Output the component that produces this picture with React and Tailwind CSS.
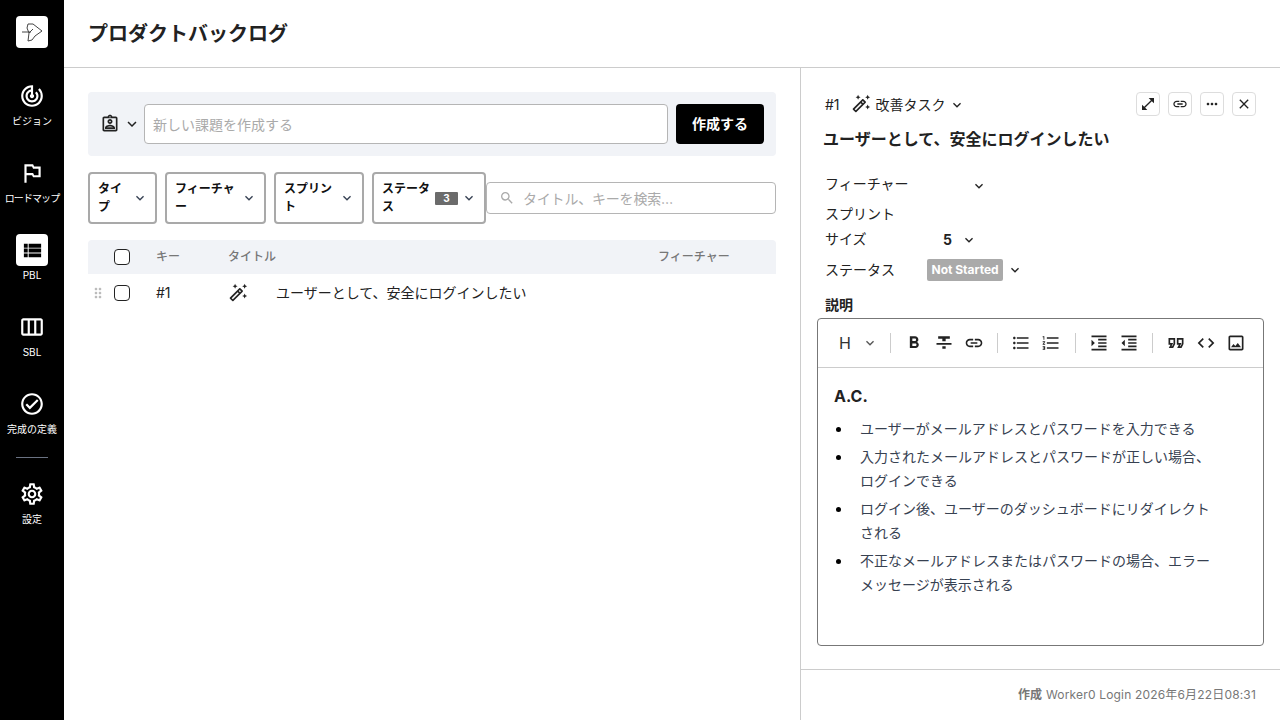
import React from "react";
import {
  MdOutlineTrackChanges,
  MdOutlinedFlag,
  MdViewList,
  MdOutlineViewWeek,
  MdOutlineCheckCircle,
  MdOutlineSettings,
  MdOutlineAutoFixHigh,
  MdOutlineAssignmentInd,
  MdKeyboardArrowDown,
  MdOpenInFull,
  MdLink,
  MdMoreHoriz,
  MdClose,
  MdDragIndicator,
  MdSearch,
  MdFormatBold,
  MdFormatStrikethrough,
  MdFormatListBulleted,
  MdFormatListNumbered,
  MdFormatIndentIncrease,
  MdFormatIndentDecrease,
  MdOutlineFormatQuote,
  MdCode,
  MdOutlineImage,
} from "react-icons/md";

const font = "font-['Inter','Noto_Sans_CJK_JP',sans-serif]";

const Logo = () => (
  <svg width="22" height="22" viewBox="0 0 22 22" fill="none" stroke="#444" strokeWidth="1">
    <path d="M1 11h9M7 3h5l9 7-7 5-3 4-4 1 1-8-2-5zM8 12l4-4" />
  </svg>
);

const NavItem = ({ icon: Icon, label, active, className, size = 26, labelClass = "" }) => (
  <div className={`flex flex-col items-center ${className}`}>
    <div className={`w-8 h-8 rounded flex items-center justify-center ${active ? "bg-white text-black" : "text-white"}`}>
      <Icon size={size} />
    </div>
    <span className={`text-[10px] leading-[14px] text-white mt-[2px] whitespace-nowrap ${labelClass}`}>{label}</span>
  </div>
);

const Sidebar = () => (
  <aside className="w-16 shrink-0 bg-black flex flex-col items-center pt-4">
    <div className="w-8 h-8 bg-white rounded flex items-center justify-center">
      <Logo />
    </div>
    <NavItem icon={MdOutlineTrackChanges} label="ビジョン" className="mt-8" />
    <NavItem icon={MdOutlinedFlag} label="ロードマップ" labelClass="tracking-[-0.9px]" className="mt-[29px]" />
    <NavItem icon={MdViewList} label="PBL" size={23} active className="mt-[29px]" />
    <NavItem icon={MdOutlineViewWeek} label="SBL" className="mt-[29px]" />
    <NavItem icon={MdOutlineCheckCircle} label="完成の定義" className="mt-[29px]" />
    <div className="w-8 h-px bg-gray-500 mt-[21px]" />
    <NavItem icon={MdOutlineSettings} label="設定" className="mt-5" />
  </aside>
);

const FilterButton = ({ label, width, badge }) => (
  <button className={`h-[52px] ${width} shrink-0 border-2 border-[#a9a9a9] rounded flex items-center pl-2 pr-[7px] text-left`}>
    <span className="flex-1 text-xs leading-[18px] font-bold text-[#111]">{label}</span>
    {badge && <span className="w-[23px] text-center bg-[#6b6b6b] text-white text-[10px] leading-[13px] font-bold ml-[5px] mr-[3px] rounded-[1px]">{badge}</span>}
    <MdKeyboardArrowDown size={16} className="text-gray-700" />
  </button>
);

const Backlog = () => (
  <section className="flex-1 min-w-0 pl-6 pr-6 pt-6">
    <div className="h-16 bg-[#f1f3f7] rounded flex items-center pl-3 pr-3">
      <MdOutlineAssignmentInd size={20} className="text-[#222]" />
      <MdKeyboardArrowDown size={18} className="text-[#222] ml-[3px] mr-[3px]" />
      <div className="w-[524px] h-10 bg-white border border-[#b5b5b5] rounded flex items-center px-2 pt-[1px] text-sm text-[#aaa]">
        新しい課題を作成する
      </div>
      <button className="ml-2 w-[88px] h-10 bg-black text-white text-sm font-bold rounded">作成する</button>
    </div>

    <div className="flex items-center gap-2 mt-4">
      <FilterButton label="タイプ" width="w-[69px]" />
      <FilterButton label="フィーチャー" width="w-[101px]" />
      <FilterButton label="スプリント" width="w-[90px]" />
      <FilterButton label="ステータス" width="w-[114px] -mr-2" badge="3" />
      <div className="flex-1 h-8 border border-[#b5b5b5] rounded flex items-center pl-3 text-sm tracking-[-0.2px] leading-[32px] pt-[1px] text-[#aaa]">
        <MdSearch size={16} className="mr-2 -mt-[1px]" />
        タイトル、キーを検索…
      </div>
    </div>

    <div className="h-[34px] bg-[#f1f3f7] rounded-t mt-4 flex items-center text-xs font-medium text-[#777]">
      <div className="w-[68px] pl-[26px]">
        <div className="w-4 h-4 border border-[#222] rounded-sm bg-white" />
      </div>
      <div className="w-[72px]">キー</div>
      <div className="w-[430px]">タイトル</div>
      <div>フィーチャー</div>
    </div>
    <div className="h-[38px] flex items-center text-sm text-[#222]">
      <div className="w-[68px] flex items-center pl-[2px]">
        <MdDragIndicator size={16} className="text-[#bbb]" />
        <div className="w-4 h-4 border border-[#222] rounded-sm bg-white ml-2" />
      </div>
      <div className="w-[72px]">#1</div>
      <div className="w-[48px]"><MdOutlineAutoFixHigh size={20} /></div>
      <div>ユーザーとして、安全にログインしたい</div>
    </div>
  </section>
);

const IconBox = ({ icon: Icon, size = 16 }) => (
  <button className="w-6 h-6 border border-[#ddd] rounded flex items-center justify-center text-[#222]">
    <Icon size={size} />
  </button>
);

const Sep = () => <div className="w-px h-5 bg-[#ccc]" />;

const Toolbar = () => (
  <div className="h-[49px] border-b border-[#ccc] flex items-center pl-[21px] text-[#222]">
    <span className="text-base leading-none text-[#333] w-4">H</span>
    <MdKeyboardArrowDown size={16} className="text-[#555] ml-[7px]" />
    <div className="ml-3 mr-[13px]"><Sep /></div>
    <div className="flex items-center gap-[10px]">
      <MdFormatBold size={20} />
      <MdFormatStrikethrough size={20} />
      <MdLink size={20} />
    </div>
    <div className="mx-[13px]"><Sep /></div>
    <div className="flex items-center gap-[10px]">
      <MdFormatListBulleted size={20} />
      <MdFormatListNumbered size={20} />
    </div>
    <div className="ml-[14px] mr-[13px]"><Sep /></div>
    <div className="flex items-center gap-[10px]">
      <MdFormatIndentIncrease size={20} />
      <MdFormatIndentDecrease size={20} />
    </div>
    <div className="mx-[13px]"><Sep /></div>
    <div className="flex items-center gap-[10px]">
      <MdOutlineFormatQuote size={20} />
      <MdCode size={20} />
      <MdOutlineImage size={20} />
    </div>
  </div>
);

const Li = ({ children }) => (
  <li className="mb-[3px] pl-2">{children}</li>
);

const Detail = () => (
  <section className="w-[480px] shrink-0 border-l border-[#ccc] flex flex-col">
    <div className="flex-1 min-h-0 pl-4 pr-4 pt-6">
      <div className="flex items-center h-6 pl-2 pr-2 text-sm text-[#222]">
        <span className="pt-[2px]">#1</span>
        <MdOutlineAutoFixHigh size={20} className="ml-[11px]" />
        <span className="ml-[5px] pt-[2px]">改善タスク</span>
        <MdKeyboardArrowDown size={16} className="ml-[3px] mt-[2px]" />
        <div className="ml-auto flex gap-2">
          <IconBox icon={MdOpenInFull} />
          <IconBox icon={MdLink} />
          <IconBox icon={MdMoreHoriz} />
          <IconBox icon={MdClose} />
        </div>
      </div>
      <h2 className="text-base leading-6 font-bold text-[#222] mt-[11px] pl-[6px]">ユーザーとして、安全にログインしたい</h2>
      <div className="text-sm text-[#222] pl-2 mt-5">
        <div className="flex items-center h-[26px]">
          <span className="w-[146px]">フィーチャー</span>
          <MdKeyboardArrowDown size={16} className="mt-[3px]" />
        </div>
        <div className="h-[24px] flex items-center mt-[5px]">スプリント</div>
        <div className="flex items-center h-[26px]">
          <span className="w-[118px]">サイズ</span>
          <span className="font-bold pt-[2px]">5</span>
          <MdKeyboardArrowDown size={16} className="ml-[9px] mt-[2px]" />
        </div>
        <div className="flex items-center h-[32px] mt-[2px]">
          <span className="w-[102px]">ステータス</span>
          <span className="bg-[#aaa] text-white text-xs font-bold rounded-[2px] px-[4.5px] h-[22px] leading-[22px]">Not Started</span>
          <MdKeyboardArrowDown size={16} className="ml-1" />
        </div>
        <div className="font-bold mt-[9px]">説明</div>
      </div>
      <div className="h-[328px] border border-[#777] rounded mt-[3px]">
        <Toolbar />
        <div className="pl-4 pr-[50px] pt-4 text-[#374151] text-sm leading-[24.5px]">
          <div className="text-base font-bold text-[#222] leading-6 mb-[9px]">A.C.</div>
          <ul className="list-disc pl-[18px] marker:text-black">
            <Li>ユーザーがメールアドレスとパスワードを入力できる</Li>
            <Li>入力されたメールアドレスとパスワードが正しい場合、ログインできる</Li>
            <Li>ログイン後、ユーザーのダッシュボードにリダイレクトされる</Li>
            <Li>不正なメールアドレスまたはパスワードの場合、エラーメッセージが表示される</Li>
          </ul>
        </div>
      </div>
    </div>
    <div className="h-[51px] border-t border-[#ccc] flex items-center justify-end pr-6 text-xs text-[#777]">
      <span className="font-bold mr-1">作成</span>
      <span className="tracking-[0.17px]">Worker0 Login 2026年6月22日08:31</span>
    </div>
  </section>
);

export default function App() {
  return (
    <div className={`h-screen w-screen flex overflow-hidden bg-white ${font}`}>
      <Sidebar />
      <div className="flex-1 min-w-0 flex flex-col">
        <header className="h-[68px] shrink-0 border-b border-[#ccc] flex items-center pl-6">
          <h1 className="text-xl font-bold text-[#222]">プロダクトバックログ</h1>
        </header>
        <div className="flex-1 min-h-0 flex">
          <Backlog />
          <Detail />
        </div>
      </div>
    </div>
  );
}
